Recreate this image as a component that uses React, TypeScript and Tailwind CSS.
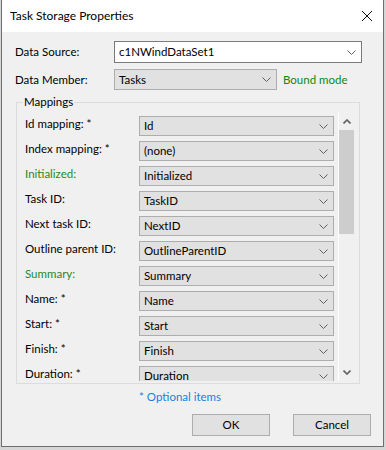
import React from "react";

const FONT = { fontFamily: "Lato, 'Noto Sans', sans-serif" };

function Chevron() {
  return (
    <svg width="9" height="5" viewBox="0 0 9 5" className="shrink-0">
      <polyline points="0.5,0.5 4.5,4.5 8.5,0.5" fill="none" stroke="#606060" strokeWidth="1" />
    </svg>
  );
}

function Combo({ value, white, className }: { value: string; white?: boolean; className: string }) {
  return (
    <div
      className={
        "flex items-center justify-between pl-[4px] pr-[5px] border text-[11.5px] text-black " +
        (white ? "bg-white border-[#7a7a7a] " : "bg-[#e1e1e1] border-[#adadad] ") +
        className
      }
    >
      <span className="leading-none">{value}</span>
      <Chevron />
    </div>
  );
}

const rows: { label: string; value: string; green?: boolean }[] = [
  { label: "Id mapping: *", value: "Id" },
  { label: "Index mapping: *", value: "(none)" },
  { label: "Initialized:", value: "Initialized", green: true },
  { label: "Task ID:", value: "TaskID" },
  { label: "Next task ID:", value: "NextID" },
  { label: "Outline parent ID:", value: "OutlineParentID" },
  { label: "Summary:", value: "Summary", green: true },
  { label: "Name: *", value: "Name" },
  { label: "Start: *", value: "Start" },
  { label: "Finish: *", value: "Finish" },
  { label: "Duration: *", value: "Duration" },
];

export default function App() {
  return (
    <div className="w-[386px] h-[450px] bg-[#d6d6d6] overflow-hidden" style={FONT}>
      <div className="ml-[1px] w-[383px] h-[447px] flex flex-col border-l border-r border-b border-[#6e6e6e] bg-[#f0f0f0]">
        {/* Title bar */}
        <div className="h-[32px] shrink-0 bg-white flex items-center justify-between pl-[8px] pr-[9px]">
          <span className="text-[12px] text-black">Task Storage Properties</span>
          <svg width="12" height="12" viewBox="0 0 12 12" className="mr-[1px]">
            <line x1="1" y1="1" x2="11" y2="11" stroke="#111" strokeWidth="1" />
            <line x1="11" y1="1" x2="1" y2="11" stroke="#111" strokeWidth="1" />
          </svg>
        </div>

        {/* Body */}
        <div className="flex-1 flex flex-col pl-[13px] text-[11.5px] text-black">
          <div className="mt-[9px] flex items-center">
            <span className="w-[99px]">Data Source:</span>
            <Combo value="c1NWindDataSet1" white className="w-[248px] h-[22px]" />
          </div>
          <div className="mt-[6px] flex items-center">
            <span className="w-[99px]">Data Member:</span>
            <Combo value="Tasks" className="w-[163px] h-[21px]" />
            <span className="ml-[6px] text-[#0b8a0b]">Bound mode</span>
          </div>

          {/* Group box */}
          <div className="relative mt-[12px] ml-[1px] w-[344px] h-[282px] border border-[#dcdcdc] pt-[10px] pl-[5px] pb-[2px]">
            <span className="absolute left-[6px] top-[-9px] px-[1px] bg-[#f0f0f0] leading-[16px]">Mappings</span>
            <div className="flex h-[268px] overflow-hidden">
              <div className="w-[316px] pt-[3px] flex flex-col">
                {rows.map((r) => (
                  <div key={r.label} className="h-[25px] shrink-0 flex items-start">
                    <span className={"w-[117px] pl-[3px] leading-[16px] " + (r.green ? "text-[#1f8a1f]" : "")}>
                      {r.label}
                    </span>
                    <Combo value={r.value} className="w-[195px] h-[20px]" />
                  </div>
                ))}
              </div>
              <div className="w-[17px] h-full border-l border-white flex flex-col">
                <div className="h-[17px] flex items-center justify-center">
                  <svg width="8" height="5" viewBox="0 0 8 5">
                    <polyline points="0.5,4.5 4,1 7.5,4.5" fill="none" stroke="#606060" strokeWidth="1.6" />
                  </svg>
                </div>
                <div className="w-[15px] h-[104px] bg-[#cdcdcd]" />
                <div className="flex-1" />
                <div className="h-[17px] flex items-center justify-center">
                  <svg width="8" height="5" viewBox="0 0 8 5">
                    <polyline points="0.5,0.5 4,4 7.5,0.5" fill="none" stroke="#606060" strokeWidth="1.6" />
                  </svg>
                </div>
              </div>
            </div>
          </div>

          <div className="mt-[5px] pl-[124px] text-[#1a7fe0] leading-[16px]">* Optional items</div>

          <div className="mt-[9px] flex gap-[23px] pl-[177px]">
            <button className="w-[78px] h-[22px] bg-[#e1e1e1] border border-[#adadad] text-[11.5px] text-black">OK</button>
            <button className="w-[78px] h-[22px] bg-[#e1e1e1] border border-[#adadad] text-[11.5px] text-black">Cancel</button>
          </div>
        </div>
      </div>
    </div>
  );
}
